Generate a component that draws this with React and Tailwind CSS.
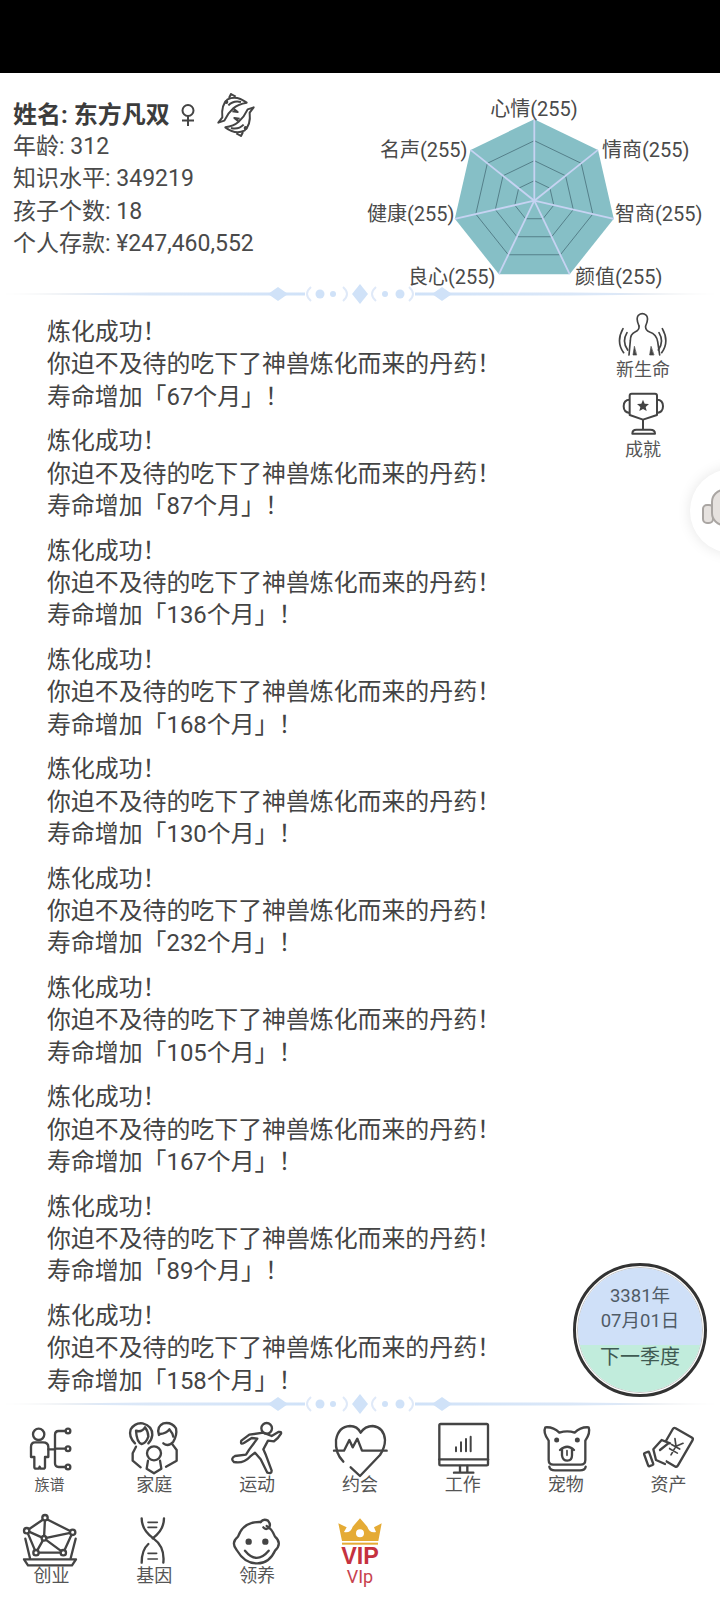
import React from "react";

const FONT = "font-[Roboto,'Noto_Sans_CJK_SC',sans-serif]";
const logs = [67, 87, 136, 168, 130, 232, 105, 167, 89, 158];
const LINE = "#444444";

function Divider() {
  const idL = React.useId();
  const idR = React.useId();
  return (
    <svg className="block w-full h-5 shrink-0" viewBox="0 0 720 20">
      <defs>
        <linearGradient id={idL} x1="0" x2="1" y1="0" y2="0">
          <stop offset="0" stopColor="#d0d0d0" stopOpacity="0.15" />
          <stop offset="0.35" stopColor="#d9e6f7" stopOpacity="0.9" />
          <stop offset="1" stopColor="#d0e2f8" />
        </linearGradient>
        <linearGradient id={idR} x1="1" x2="0" y1="0" y2="0">
          <stop offset="0" stopColor="#d0d0d0" stopOpacity="0.15" />
          <stop offset="0.35" stopColor="#d9e6f7" stopOpacity="0.9" />
          <stop offset="1" stopColor="#d0e2f8" />
        </linearGradient>
      </defs>
      <polygon points="0,10 150,8.5 305,8.5 305,11.5 150,11.5" fill={`url(#${idL})`} />
      <polygon points="720,10 570,8.5 415,8.5 415,11.5 570,11.5" fill={`url(#${idR})`} />
      <g fill="#d0e2f8">
        <path d="M268 10 L278 3 L288 10 L278 17Z" />
        <path d="M432 10 L442 3 L452 10 L442 17Z" />
        <path d="M360 0 L368 10 L360 20 L352 10Z" />
        <circle cx="320" cy="10" r="4.5" />
        <circle cx="333" cy="10" r="3" />
        <circle cx="385" cy="10" r="3" />
        <circle cx="400" cy="10" r="4.5" />
      </g>
      <g fill="none" stroke="#dfe9f8" strokeWidth="2">
        <path d="M311 3 Q303 10 311 17" />
        <path d="M343 3 Q351 10 343 17" />
        <path d="M376 3 Q368 10 376 17" />
        <path d="M409 3 Q417 10 409 17" />
      </g>
    </svg>
  );
}

function Radar() {
  const cx = 534.3;
  const cy = 200.7;
  const pt = (i, r) => {
    const a = -Math.PI / 2 + (i * 2 * Math.PI) / 7;
    return [cx + r * Math.cos(a), cy + r * Math.sin(a)];
  };
  const poly = (r) => [0, 1, 2, 3, 4, 5, 6].map((i) => pt(i, r).join(",")).join(" ");
  const labels = [
    ["心情(255)", 534, 116, "middle"],
    ["情商(255)", 602, 157, "start"],
    ["智商(255)", 615, 221, "start"],
    ["颜值(255)", 575, 284, "start"],
    ["良心(255)", 408, 284, "start"],
    ["健康(255)", 367, 221, "start"],
    ["名声(255)", 380, 157, "start"],
  ];
  return (
    <svg width="360" height="211" viewBox="360 73 360 211" className="shrink-0 overflow-visible">
      <polygon points={poly(81.5)} fill="#86bfc6" />
      {[20, 40, 60].map((r) => (
        <polygon key={r} points={poly(r)} fill="none" stroke="#55808a" strokeWidth="1" />
      ))}
      {[0, 1, 2, 3, 4, 5, 6].map((i) => {
        const [x, y] = pt(i, 81.5);
        return <line key={i} x1={cx} y1={cy} x2={x} y2={y} stroke="#c6d3f2" strokeWidth="1.8" />;
      })}
      {labels.map(([t, x, y, a]) => (
        <text key={t} x={x} y={y} textAnchor={a} fontSize="20" fill="#4a4a4a">
          {t}
        </text>
      ))}
    </svg>
  );
}

function Pisces() {
  const fish = (
    <g>
      <path d="M50 98 L62 82 Q58 45 78 28 Q105 15 135 38 Q110 42 95 55 Q78 70 68 92 Z" />
      <path d="M82 24 L88 12 L102 20" />
      <path d="M80 46 Q96 30 118 36" />
      <path d="M96 56 L108 66 L92 64" />
      <circle cx="74" cy="36" r="3" fill="#444" />
    </g>
  );
  return (
    <svg width="44" height="44" viewBox="37 9 132 132" fill="none" stroke="#444" strokeWidth="6" strokeLinejoin="round" className="ml-[18px] -my-[6px]">
      {fish}
      <g transform="rotate(180 103 75)">{fish}</g>
    </svg>
  );
}

function Female() {
  return (
    <svg width="16" height="24" viewBox="0 0 16 24" fill="none" stroke="#444" strokeWidth="2" className="ml-[10px]">
      <circle cx="8" cy="7.5" r="5.5" />
      <path d="M8 13 V23 M2 17.5 H14" />
    </svg>
  );
}

function Human() {
  return (
    <svg width="54" height="46" viewBox="107 36 162 138" fill="none" stroke="#444" strokeWidth="5" strokeLinecap="round" strokeLinejoin="round">
      <path d="M176 78 Q166 56 174 46 Q186 36 198 46 Q206 56 196 78 Q194 90 208 96 Q228 102 232 125 L238 165" />
      <path d="M176 78 Q178 90 164 96 Q150 102 150 122 L146 165" />
      <path d="M162 140 L158 165 L168 165 Z M212 140 L208 165 L220 165 Z" fill="#444" strokeWidth="2" />
      <path d="M128 86 Q106 125 130 158 M140 98 Q124 125 142 150" />
      <path d="M246 86 Q268 125 244 158 M236 98 Q252 125 234 150" />
    </svg>
  );
}

function Trophy() {
  return (
    <svg width="42" height="44" viewBox="127 272 126 132" fill="none" stroke="#444" strokeWidth="6" strokeLinejoin="round">
      <path d="M156 280 H226 Q232 280 232 286 V344 L190 358 L150 344 V286 Q150 280 156 280Z" />
      <path d="M150 298 Q132 298 132 318 Q132 336 150 338 M232 298 Q250 298 250 318 Q250 336 232 338" />
      <path d="M190 358 V388 M158 400 Q158 388 170 388 H212 Q226 388 226 400 Z" />
      <path d="M190 298 L195 310 L208 311 L198 320 L201 332 L190 326 L179 332 L182 320 L172 311 L185 310Z" fill="#444" stroke="none" />
    </svg>
  );
}

function Tile({ cx, top, strokeW = 7, children, label, labelClass = "text-[18px] leading-[24px] -mt-[1px] text-[#555555]" }) {
  return (
    <div className="flex flex-col items-center h-[91px]">
      <svg width="54" height="54" viewBox={`${cx - 81} ${top} 162 162`} fill="none" stroke={LINE} strokeWidth={strokeW} strokeLinecap="round" strokeLinejoin="round" className="overflow-visible shrink-0">
        {children}
      </svg>
      <span className={labelClass}>{label}</span>
    </div>
  );
}

function Icons() {
  const R1 = 90;
  const R2 = 363;
  return (
    <div className="grid grid-cols-7 pt-[6px]">
      <Tile cx={153} top={R1} label="族谱" labelClass="text-[15px] leading-[24px] -mt-[1px] -ml-[4px] text-[#555555]">
        <circle cx="116" cy="133" r="17" />
        <path d="M105 157 h24 q16 0 16 14 v30 h-10 v30 q0 5 -5 5 h-8 l-3 -6 l-3 6 h-8 q-5 0 -5 -5 v-30 h-10 v-30 q0 -14 12 -14z" />
        <path d="M145 178 H165 M196 123 H176 Q165 123 165 134 V220 Q165 231 176 231 H196 M165 176 H196" />
        <circle cx="204" cy="123" r="7" />
        <circle cx="204" cy="176" r="7" />
        <circle cx="204" cy="231" r="7" />
      </Tile>
      <Tile cx={462} top={R1} label="家庭">
        <path d="M405 160 Q385 140 392 118 Q405 97 428 100 Q458 108 457 135 Q455 150 445 160" />
        <path d="M408 122 Q425 128 435 112 Q445 125 445 140 Q438 160 425 162 Q410 158 408 122Z" />
        <path d="M477 135 Q468 110 490 100 Q515 95 528 115 Q532 135 520 155 Q505 172 490 160" />
        <path d="M480 132 Q500 130 508 118 Q518 130 520 140" />
        <circle cx="462" cy="190" r="21" />
        <path d="M408 170 L398 190 V212 L422 232 M515 160 L530 180 V212 L498 230" />
        <path d="M444 212 L440 236 L462 250 L484 236 L480 212" />
      </Tile>
      <Tile cx={771} top={R1} label="运动">
        <circle cx="800" cy="115" r="16" />
        <path d="M843 131 Q845 124 835 126 L815 138 L790 128 L748 134 L724 152 Q720 166 733 158 L755 144 L772 146 L748 178 L738 194 L705 198 Q690 206 702 216 Q730 222 750 200 L765 188 L782 208 L802 248 Q815 252 815 242 L798 196 L790 178 L804 152 L822 154 Q835 145 843 131Z" />
      </Tile>
      <Tile cx={1080} top={R1} label="约会">
        <path d="M1030 215 Q1005 190 1008 150 Q1015 110 1050 108 Q1072 108 1082 128 Q1095 108 1118 108 Q1152 112 1155 150 Q1155 172 1140 195 L1080 258 L1052 232" />
        <path d="M1002 182 H1032 L1048 150 L1058 172 L1072 146 L1086 182 H1160" />
      </Tile>
      <Tile cx={309} top={R1} label="工作">
        <rect x="238" y="102" width="146" height="124" rx="4" />
        <path d="M238 208 H384" />
        <path d="M300 228 V247 M322 228 V247 M282 248 H340" />
        <path d="M288 184 V172 M303 184 V157 M318 184 V147 M332 184 V140" strokeWidth="6" />
      </Tile>
      <Tile cx={618} top={R1} label="宠物">
        <path d="M566 152 Q548 128 556 112 Q580 110 598 128 Q622 120 644 128 Q662 110 686 112 Q692 128 676 152 V210 Q676 224 662 224 H580 Q566 224 566 210 Z" />
        <path d="M568 230 Q570 241 585 241 H660 Q675 241 677 230" />
        <circle cx="590" cy="150" r="4" fill={LINE} />
        <circle cx="652" cy="150" r="4" fill={LINE} />
        <path d="M600 180 Q622 160 642 180" />
        <path d="M606 178 V196 Q608 212 622 212 Q636 212 636 196 V178" />
        <path d="M621 182 V196" strokeWidth="5" />
      </Tile>
      <Tile cx={927} top={R1} label="资产">
        <g transform="rotate(30 946 172)">
          <rect x="912" y="122" width="68" height="100" rx="6" />
          <path d="M932 150 L946 168 L960 150 M946 168 V198 M932 170 H960 M932 184 H960" strokeWidth="5" />
        </g>
        <path d="M930 160 L905 150 L880 178 L888 210 L915 222" fill="#fff" />
        <path d="M900 180 L925 160" />
        <rect x="858" y="186" width="16" height="42" rx="3" transform="rotate(-20 866 207)" />
      </Tile>

      <Tile cx={153} top={R2} label="创业">
        <path d="M135 385 L218 427 L190 488 H108 L80 422 Z" />
        <path d="M135 385 L132 445 M80 422 L132 445 L218 427 M108 488 L132 445 L190 488" />
        <g fill="#fff">
          <circle cx="135" cy="383" r="8" />
          <circle cx="218" cy="427" r="8" />
          <circle cx="190" cy="488" r="8" />
          <circle cx="108" cy="488" r="8" />
          <circle cx="80" cy="422" r="8" />
          <circle cx="132" cy="445" r="7" />
        </g>
        <path d="M76 446 L90 505 M227 446 L212 505" />
        <path d="M72 508 H228 L216 526 H84 Z" />
      </Tile>
      <Tile cx={462} top={R2} label="基因">
        <path d="M425 385 Q425 420 460 445 Q495 470 490 518" />
        <path d="M492 385 Q492 420 458 445 M445 462 Q425 480 425 518" />
        <path d="M444 397 H472 M444 412 H470 M444 490 H470 M444 507 H472" strokeWidth="5" />
      </Tile>
      <Tile cx={771} top={R2} label="领养">
        <path d="M782 396 Q730 394 714 440 Q692 458 710 480 Q735 522 772 520 Q808 520 825 482 Q848 460 825 440 Q815 415 800 408" />
        <path d="M782 396 Q790 385 804 392 Q815 405 805 415 Q796 420 790 412" />
        <circle cx="746" cy="455" r="6" fill={LINE} />
        <circle cx="796" cy="455" r="6" fill={LINE} />
        <path d="M735 482 Q770 525 806 482" />
      </Tile>
      <Tile cx={1080} top={R2} label="VIp" labelClass="text-[18px] leading-[20px] mt-[2px] text-[#c8434f]">
        <path d="M1015 400 L1040 412 L1032 426 Q1052 430 1058 410 L1080 385 L1102 410 Q1108 430 1128 426 L1122 412 L1145 400 L1135 453 H1026 Z" fill="#e5ab35" stroke="none" />
        <circle cx="1080" cy="430" r="12" fill="#fff" stroke="none" />
        <rect x="1026" y="458" width="108" height="6" fill="#e5ab35" stroke="none" />
        <text x="1080" y="522" textAnchor="middle" fontSize="70" fontWeight="700" fill="#c5323f" stroke="none" className="font-['Liberation_Sans',sans-serif]">
          VIP
        </text>
      </Tile>
      <div />
      <div />
      <div />
    </div>
  );
}

export default function App() {
  return (
    <div className={`relative w-[720px] h-[1602px] overflow-hidden bg-white text-[#444444] ${FONT}`}>
      <div className="h-[73px] bg-black" />
      <div className="flex justify-between h-[211px]">
        <div className="pl-[13px] pt-[26px] text-[23px] leading-[32.2px] text-[#4a4a4a]">
          <div className="flex items-center font-bold text-[24px] text-[#3c3c3c]">
            <span>姓名: 东方凡双</span>
            <Female />
            <Pisces />
          </div>
          <div>年龄: 312</div>
          <div>知识水平: 349219</div>
          <div>孩子个数: 18</div>
          <div>个人存款: ¥247,460,552</div>
        </div>
        <Radar />
      </div>
      <Divider />
      <div className="flex h-[1090px] pt-[12px]">
        <div className="flex-1 pl-[47px] text-[23.9px] leading-[32.4px] text-[#444444]">
          {logs.map((n, i) => (
            <div key={i} className="mb-[12.1px]">
              <div>炼化成功！</div>
              <div>你迫不及待的吃下了神兽炼化而来的丹药！</div>
              <div>寿命增加「{n}个月」！</div>
            </div>
          ))}
        </div>
        <div className="w-[100px] mr-[27px] -mt-[4px] flex flex-col items-center text-[18px] leading-[24px] text-[#555555]">
          <Human />
          <div>新生命</div>
          <div className="mt-[9px]">
            <Trophy />
          </div>
          <div className="mt-[3px]">成就</div>
        </div>
      </div>
      <Divider />
      <Icons />

      <div className="absolute left-[690px] top-[469px] w-[84px] h-[84px] rounded-full bg-white shadow-[0_0_14px_rgba(0,0,0,0.1)] overflow-hidden">
        <svg width="30" height="60" viewBox="0 0 30 60" className="mt-[20px]" fill="#e6e2df" stroke="#aaa6a3" strokeWidth="2">
          <rect x="13" y="16" width="10" height="18" rx="4" />
          <rect x="22" y="1" width="30" height="35" rx="12" />
        </svg>
      </div>

      <div className="absolute left-[573px] top-[1263px] w-[134px] h-[134px] rounded-full border-[3px] border-[#333333] bg-white p-[1px]">
        <div className="w-full h-full rounded-full overflow-hidden flex flex-col border border-[#c8c8c8] text-[#4f5b66]">
          <div className="h-[77px] bg-[#cfe0f8] flex flex-col items-center justify-end text-[18.5px] leading-[25px] pb-[11px]">
            <div>3381年</div>
            <div>07月01日</div>
          </div>
          <div className="flex-1 bg-[#c1ecdc] text-center text-[20px] leading-[24px] text-[#3f5a52]">下一季度</div>
        </div>
      </div>
    </div>
  );
}
